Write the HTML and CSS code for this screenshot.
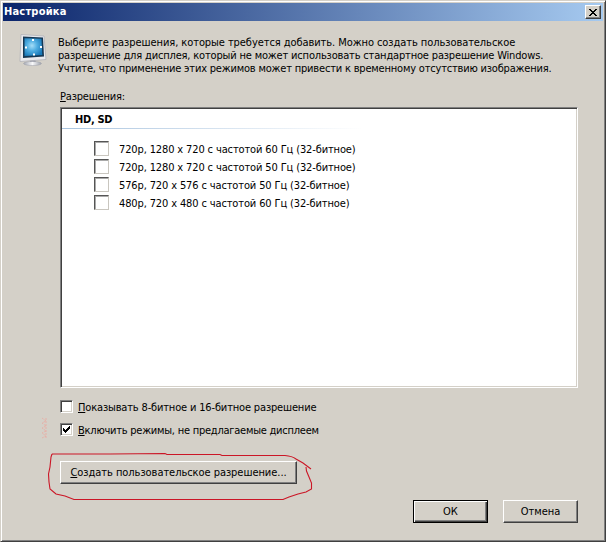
FILE: index.html
```html
<!DOCTYPE html>
<html lang="ru">
<head>
<meta charset="utf-8">
<title>Настройка</title>
<link rel="stylesheet" href="styles.css">
</head>
<body>
<main class="dialog">
  <header class="titlebar">
    <h1 class="title">Настройка</h1>
    <button class="close" aria-label="Закрыть"><svg width="8" height="7" viewBox="0 0 8 7" shape-rendering="crispEdges"><path d="M0 0h2v1h1v1h2V1h1V0h2v1H7v1H6v1H5v1h1v1h1v1h1v1H6V6H5V5H3v1H2v1H0V6h1V5h1V4h1V3H2V2H1V1H0z"/></svg></button>
  </header>
  <section class="intro">
    <svg class="monitor" width="28" height="34" viewBox="0 0 28 34">
      <defs>
        <radialGradient id="screen" cx=".42" cy=".42" r=".65"><stop offset="0" stop-color="#a5ddf7"/><stop offset=".45" stop-color="#50aee2"/><stop offset="1" stop-color="#1878b8"/></radialGradient>
        <linearGradient id="stand" x2="1"><stop offset="0" stop-color="#a4a8b2"/><stop offset=".5" stop-color="#f8f8fa"/><stop offset="1" stop-color="#9ca0a9"/></linearGradient>
      </defs>
      <path d="M11 25h5l1 4h-6z" fill="#85899a"/>
      <ellipse cx="13.500" cy="29.500" rx="9" ry="2" fill="url(#stand)" stroke="#9a9da6" stroke-width=".5"/>
      <path d="M2 .5L25 2l2 23.500L1 27.500z" fill="#e9e9ed" stroke="#b0b1b8" stroke-width=".8"/>
      <path d="M4 2.500L24 3.500l1 19L4 24z" fill="#163753"/>
      <path d="M5.500 4.200l17 .6.8 16.200-17.800 1z" fill="url(#screen)"/>
      <path d="M13 5h2v2h-2zM14 19.500h2v2h-2zM6 12.500h2v2H6zM21 12h2v2h-2z" fill="#fff"/>
    </svg>
    <p class="description"><span class="text line-a">Выберите разрешения, которые требуется добавить. Можно создать пользовательское</span><span class="text line-b">разрешение для дисплея, который не может использовать стандартное разрешение Windows.</span><span class="text line-c">Учтите, что применение этих режимов может привести к временному отсутствию изображения.</span></p>
  </section>
  <section class="content">
    <p class="list-label"><span class="text"><u>Р</u>азрешения:</span></p>
    <div class="list">
      <h2 class="group">HD, SD</h2>
      <ul class="modes">
        <li><i class="mode-box"></i><span class="text">720p, 1280 x 720 с частотой 60 Гц (32-битное)</span></li>
        <li><i class="mode-box"></i><span class="text">720p, 1280 x 720 с частотой 50 Гц (32-битное)</span></li>
        <li><i class="mode-box"></i><span class="text">576p, 720 x 576 с частотой 50 Гц (32-битное)</span></li>
        <li><i class="mode-box"></i><span class="text">480p, 720 x 480 с частотой 60 Гц (32-битное)</span></li>
      </ul>
    </div>
    <div class="option"><i class="checkbox"></i><span class="text option-a"><u>П</u>оказывать 8-битное и 16-битное разрешение</span></div>
    <div class="option"><i class="checkbox"><svg width="7" height="7" viewBox="0 0 7 7" shape-rendering="crispEdges"><path d="M0 2h1v1h1v1h1V3h1V2h1V1h1V0h1v3H6v1H5v1H4v1H3v1H2V6H1V5H0z"/></svg></i><span class="text option-b"><u>В</u>ключить режимы, не предлагаемые дисплеем</span></div>
    <button class="button create"><span class="text"><u>С</u>оздать пользовательское разрешение...</span></button>
  </section>
  <footer class="actions">
    <button class="button default"><span class="text">ОК</span></button>
    <button class="button"><span class="text">Отмена</span></button>
  </footer>
  <svg class="marker" width="606" height="542" viewBox="0 0 606 542" fill="none">
    <path stroke="#cb1626" stroke-width="1.100" d="M52 454H110L165 453.500 167 454.500H220L222 455.500H285Q292 456 296 459L303 463 311 469M306 467L306.500 471 309 477 311.500 483V489L306 492 298 494 289 497 283 499.500H74L65 496 56 494 50 489 49 482 48.500 474 50 467 51 457 52 454"/>
    <path stroke="#eea49b" stroke-width=".7" stroke-dasharray="2 1" d="M42 418l4 3-4 2 4 3-4 2 4 3-4 2 4 3-4 2M46 418v20"/>
  </svg>
</main>
</body>
</html>
```
FILE: styles.css
```css
* { box-sizing: border-box; }
body { margin: 0; color: #000; font: 11px/13px "DejaVu Sans Condensed", "DejaVu Sans", sans-serif; font-stretch: condensed; }
h1, h2, p, ul { margin: 0; padding: 0; }
button { padding: 0; font: inherit; color: inherit; }
u { text-decoration-thickness: 1px; text-underline-offset: 1px; text-decoration-skip-ink: none; }
.dialog { position: relative; width: 606px; height: 542px; padding: 2px 1px 2px 2px; overflow: hidden; background: #d4d0c8; border: 1px solid #404040; border-left-color: #d4d0c8; border-top-color: #d4d0c8; box-shadow: inset 1px 1px #fff, inset -1px -1px #808080; }
.titlebar { display: flex; justify-content: space-between; align-items: center; width: 600px; height: 18px; padding: 0 2px 0 1px; background: linear-gradient(90deg, #0a246a, #a6caf0); }
.title { color: #fff; font-size: 11px; line-height: 14px; letter-spacing: .2px; white-space: nowrap; }
.close { display: grid; place-items: center; width: 16px; height: 14px; background: #d4d0c8; border: 1px solid; border-color: #fff #404040 #404040 #fff; box-shadow: inset -1px -1px #808080; }
.text { display: inline-block; white-space: nowrap; }
.intro { display: flex; gap: 11px; padding: 13px 0 0 16px; height: 68px; }
.description { padding-top: 2px; }
.description .text { display: block; }
.line-a { letter-spacing: -.07px; }
.line-b { letter-spacing: -.17px; }
.line-c { letter-spacing: -.19px; }
.content { padding-left: 57px; }
.list-label { height: 18px; line-height: 15px; letter-spacing: -.2px; }
.list { width: 518px; height: 281px; padding: 2px 0 0; background: #fff; border: 1px solid; border-color: #808080 #fff #fff #808080; box-shadow: inset 1px 1px #404040, inset -1px -1px #d4d0c8; }
.group { width: 300px; height: 19px; margin-left: 1px; padding: 2px 0 0 13px; font-size: 11px; line-height: 15px; letter-spacing: -.3px; border-bottom: 1px solid; border-image: linear-gradient(90deg, #a9c4df, #fff) 1; }
.modes { list-style: none; padding: 11px 0 0 33px; letter-spacing: -.13px; }
.modes li { display: flex; align-items: center; gap: 10px; height: 18px; }
.mode-box { width: 15px; height: 15px; margin-top: -1px; background: #fff; border: 1px solid; border-color: #555 #c9c6bf #c9c6bf #555; box-shadow: inset 1px 1px #aaa; }
.option { display: flex; align-items: center; gap: 5px; height: 23px; }
.option .text { padding-top: 1px; }
.option-a { letter-spacing: -.16px; }
.option-b { letter-spacing: -.24px; }
.list + .option { margin-top: 7px; }
.checkbox { display: grid; place-items: center; width: 13px; height: 13px; background: #fff; border: 1px solid; border-color: #808080 #fff #fff #808080; box-shadow: inset 1px 1px #404040, inset -1px -1px #d4d0c8; }
.button { display: flex; justify-content: center; align-items: center; width: 75px; height: 23px; background: #d4d0c8; border: 1px solid; border-color: #fff #404040 #404040 #fff; box-shadow: inset -1px -1px #808080; }
.create { width: 237px; margin-top: 20px; letter-spacing: -.05px; }
.actions { display: flex; justify-content: flex-end; gap: 15px; padding: 16px 26px 0 0; letter-spacing: -.2px; }
.default { border-color: #000; box-shadow: inset 1px 1px #fff, inset -1px -1px #404040, inset -2px -2px #808080; }
.marker { position: absolute; left: -1px; top: -1px; pointer-events: none; }
```
